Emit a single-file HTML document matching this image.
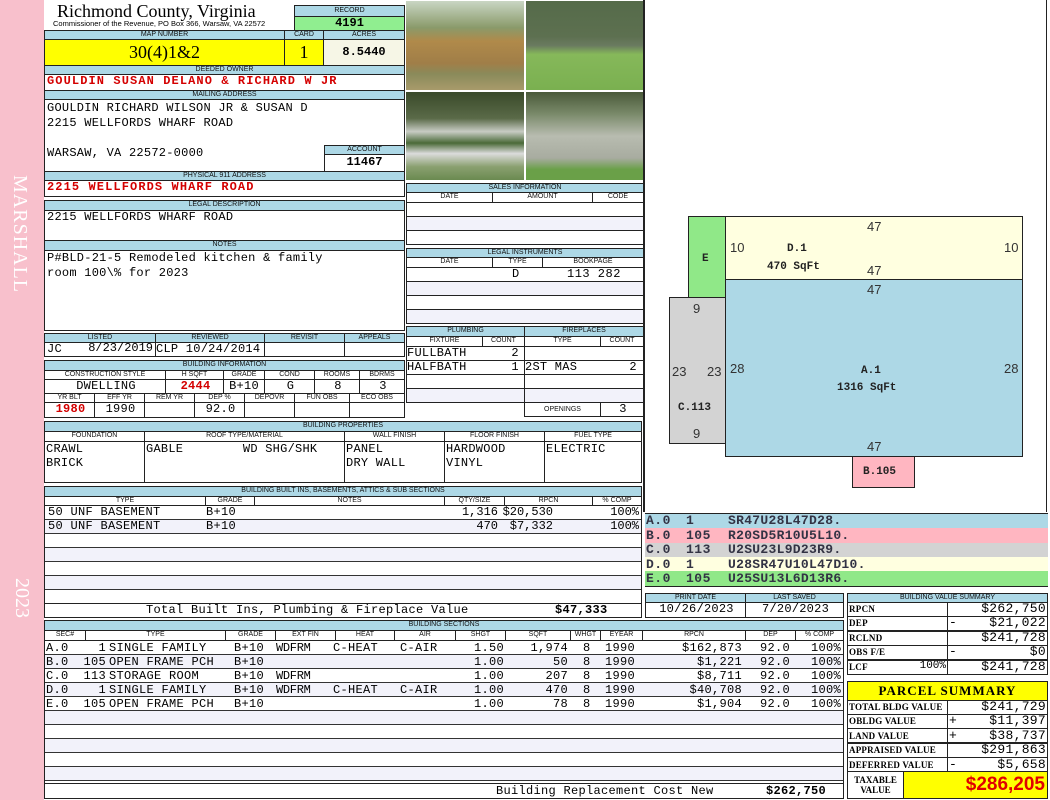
<!DOCTYPE html>
<html><head><meta charset="utf-8"><style>
*{margin:0;padding:0;box-sizing:border-box}
body{width:1050px;height:800px;background:#fff;position:relative;overflow:hidden;font-family:"Liberation Mono",monospace}
.b{position:absolute;border:1px solid #222;overflow:hidden;white-space:pre}
.h{position:absolute;border:1px solid #222;background:#add8e6;font:7px/8px "Liberation Sans",sans-serif;text-align:center;color:#111;white-space:pre;overflow:hidden}
.m{font-size:12px;line-height:13px;padding-left:2px;letter-spacing:0.25px}
.c{text-align:center}
.alt{background:#f2f2fa}
.red{color:#d40000;font-weight:bold}
.t{position:absolute;white-space:pre}
.col{position:absolute;white-space:pre;font-size:12px;line-height:14px;letter-spacing:0.3px}
.ra{text-align:right}
</style></head><body>
<div style="position:absolute;left:0;top:0;width:44px;height:800px;background:#f8c0cc"></div>
<div class="t" style="left:8px;top:175px;writing-mode:vertical-rl;font:20px 'Liberation Serif',serif;color:#fff;letter-spacing:1px">MARSHALL</div>
<div class="t" style="left:10px;top:578px;writing-mode:vertical-rl;font:20px 'Liberation Serif',serif;color:#fff">2023</div>

<div class="t" style="left:57px;top:2px;font:18px/18px 'Liberation Serif',serif">Richmond County, Virginia</div>
<div class="t" style="left:53px;top:20px;font:7.5px/8px 'Liberation Sans',sans-serif">Commissioner of the Revenue, PO Box 366, Warsaw, VA 22572</div>
<div class="h" style="left:294px;top:5px;width:111px;height:12px;line-height:10px">RECORD</div>
<div class="b c" style="left:294px;top:16px;width:111px;height:15px;background:#90ee90;font:bold 12px/13px 'Liberation Mono'">4191</div>
<div class="h" style="left:44px;top:30px;width:241px;height:10px">MAP NUMBER</div>
<div class="h" style="left:284px;top:30px;width:40px;height:10px">CARD</div>
<div class="h" style="left:323px;top:30px;width:82px;height:10px">ACRES</div>
<div class="b c" style="left:44px;top:39px;width:241px;height:27px;background:#ff0;font:18px/25px 'Liberation Serif',serif">30(4)1&amp;2</div>
<div class="b c" style="left:284px;top:39px;width:40px;height:27px;background:#ff0;font:18px/25px 'Liberation Serif',serif">1</div>
<div class="b c" style="left:323px;top:39px;width:82px;height:27px;background:#f6f6e6;font:bold 12px/25px 'Liberation Mono'">8.5440</div>
<div class="h" style="left:44px;top:65px;width:361px;height:10px">DEEDED OWNER</div>
<div class="b m red" style="left:44px;top:74px;width:361px;height:17px;letter-spacing:1.1px">GOULDIN SUSAN DELANO &amp; RICHARD W JR</div>
<div class="h" style="left:44px;top:90px;width:361px;height:10px">MAILING ADDRESS</div>
<div class="b m" style="left:44px;top:99px;width:361px;height:73px;line-height:15px;padding-top:1px">GOULDIN RICHARD WILSON JR &amp; SUSAN D
2215 WELLFORDS WHARF ROAD

WARSAW, VA 22572-0000</div>
<div class="h" style="left:324px;top:145px;width:81px;height:10px">ACCOUNT</div>
<div class="b c" style="left:324px;top:154px;width:81px;height:18px;font:bold 12px/15px 'Liberation Mono'">11467</div>
<div class="h" style="left:44px;top:171px;width:361px;height:10px">PHYSICAL 911 ADDRESS</div>
<div class="b m red" style="left:44px;top:180px;width:361px;height:17px;letter-spacing:1.1px">2215 WELLFORDS WHARF ROAD</div>
<div class="h" style="left:44px;top:200px;width:361px;height:11px">LEGAL DESCRIPTION</div>
<div class="b m" style="left:44px;top:210px;width:361px;height:31px">2215 WELLFORDS WHARF ROAD</div>
<div class="h" style="left:44px;top:240px;width:361px;height:11px">NOTES</div>
<div class="b m" style="left:44px;top:250px;width:361px;height:81px;line-height:15px">P#BLD-21-5 Remodeled kitchen &amp; family
room 100\% for 2023</div>

<div class="h" style="left:44px;top:333px;width:112px;height:10px">LISTED</div>
<div class="h" style="left:155px;top:333px;width:110px;height:10px">REVIEWED</div>
<div class="h" style="left:264px;top:333px;width:81px;height:10px">REVISIT</div>
<div class="h" style="left:344px;top:333px;width:61px;height:10px">APPEALS</div>
<div class="b m" style="left:44px;top:342px;width:112px;height:15px">JC</div>
<div class="t" style="left:84px;top:342px;width:69px;font-size:12px;line-height:13px;text-align:right">8/23/2019</div>
<div class="b m" style="left:155px;top:342px;width:110px;height:15px;padding-left:0">CLP 10/24/2014</div>
<div class="b" style="left:264px;top:342px;width:81px;height:15px"></div>
<div class="b" style="left:344px;top:342px;width:61px;height:15px"></div>

<div class="h" style="left:44px;top:360px;width:361px;height:11px">BUILDING INFORMATION</div>
<div class="h" style="left:44px;top:370px;width:122px;height:10px;background:#fff">CONSTRUCTION STYLE</div>
<div class="h" style="left:165px;top:370px;width:59px;height:10px;background:#fff">H SQFT</div>
<div class="h" style="left:223px;top:370px;width:42px;height:10px;background:#fff">GRADE</div>
<div class="h" style="left:264px;top:370px;width:51px;height:10px;background:#fff">COND</div>
<div class="h" style="left:314px;top:370px;width:46px;height:10px;background:#fff">ROOMS</div>
<div class="h" style="left:359px;top:370px;width:46px;height:10px;background:#fff">BDRMS</div>
<div class="b m c" style="left:44px;top:379px;width:122px;height:15px">DWELLING</div>
<div class="b m c red" style="left:165px;top:379px;width:59px;height:15px">2444</div>
<div class="b m c" style="left:223px;top:379px;width:42px;height:15px;padding:0">B+10</div>
<div class="b m c" style="left:264px;top:379px;width:51px;height:15px">G</div>
<div class="b m c" style="left:314px;top:379px;width:46px;height:15px">8</div>
<div class="b m c" style="left:359px;top:379px;width:46px;height:15px">3</div>
<div class="h" style="left:44px;top:393px;width:51px;height:10px;background:#fff">YR BLT</div>
<div class="h" style="left:94px;top:393px;width:51px;height:10px;background:#fff">EFF YR</div>
<div class="h" style="left:144px;top:393px;width:51px;height:10px;background:#fff">REM YR</div>
<div class="h" style="left:194px;top:393px;width:51px;height:10px;background:#fff">DEP %</div>
<div class="h" style="left:244px;top:393px;width:51px;height:10px;background:#fff">DEPOVR</div>
<div class="h" style="left:294px;top:393px;width:56px;height:10px;background:#fff">FUN OBS</div>
<div class="h" style="left:349px;top:393px;width:56px;height:10px;background:#fff">ECO OBS</div>
<div class="b m c red" style="left:44px;top:402px;width:51px;height:16px">1980</div>
<div class="b m c" style="left:94px;top:402px;width:51px;height:16px">1990</div>
<div class="b" style="left:144px;top:402px;width:51px;height:16px"></div>
<div class="b m c" style="left:194px;top:402px;width:51px;height:16px">92.0</div>
<div class="b" style="left:244px;top:402px;width:51px;height:16px"></div>
<div class="b" style="left:294px;top:402px;width:56px;height:16px"></div>
<div class="b" style="left:349px;top:402px;width:56px;height:16px"></div>

<div class="b" style="left:405px;top:0;width:120px;height:91px;border-color:#fff;background:linear-gradient(180deg,#c9d6c4 0%,#8a9a6a 30%,#b08a4a 45%,#a07e48 70%,#8a8a5a 82%,#a89a6a 100%)"></div>
<div class="b" style="left:525px;top:0;width:120px;height:91px;border-color:#fff;background:linear-gradient(180deg,#556b4a 0%,#5d7050 40%,#6a7a60 50%,#86b85a 60%,#7ab050 100%)"></div>
<div class="b" style="left:405px;top:91px;width:120px;height:90px;border-color:#fff;background:linear-gradient(180deg,#3a4a2a 0%,#5a6a48 30%,#c8ccc4 45%,#4a6a38 58%,#dcdcdc 70%,#8aa070 85%,#6a8a50 100%)"></div>
<div class="b" style="left:525px;top:91px;width:120px;height:90px;border-color:#fff;background:linear-gradient(180deg,#4a5a3a 0%,#7a8a6a 25%,#b8bcb0 50%,#a8aca0 75%,#6aa048 88%,#6aa048 100%)"></div>

<div class="h" style="left:406px;top:183px;width:238px;height:10px">SALES INFORMATION</div>
<div class="h" style="left:406px;top:192px;width:87px;height:11px;background:#fff">DATE</div>
<div class="h" style="left:492px;top:192px;width:101px;height:11px;background:#fff">AMOUNT</div>
<div class="h" style="left:592px;top:192px;width:52px;height:11px;background:#fff">CODE</div>
<div class="b" style="left:406px;top:202px;width:238px;height:15px"></div>
<div class="b alt" style="left:406px;top:216px;width:238px;height:15px"></div>
<div class="b" style="left:406px;top:230px;width:238px;height:15px"></div>
<div class="h" style="left:406px;top:248px;width:238px;height:10px">LEGAL INSTRUMENTS</div>
<div class="h" style="left:406px;top:257px;width:87px;height:11px;background:#fff">DATE</div>
<div class="h" style="left:492px;top:257px;width:51px;height:11px;background:#fff">TYPE</div>
<div class="h" style="left:542px;top:257px;width:102px;height:11px;background:#fff">BOOKPAGE</div>
<div class="b" style="left:406px;top:267px;width:238px;height:15px"></div>
<div class="t" style="left:512px;top:268px;font-size:12px;line-height:13px">D</div>
<div class="t" style="left:567px;top:268px;font-size:12px;line-height:13px;letter-spacing:0.5px">113 282</div>
<div class="b alt" style="left:406px;top:281px;width:238px;height:15px"></div>
<div class="b" style="left:406px;top:295px;width:238px;height:15px"></div>
<div class="b alt" style="left:406px;top:309px;width:238px;height:15px"></div>

<div class="h" style="left:406px;top:326px;width:119px;height:11px">PLUMBING</div>
<div class="h" style="left:524px;top:326px;width:120px;height:11px">FIREPLACES</div>
<div class="h" style="left:406px;top:336px;width:77px;height:11px;background:#fff">FIXTURE</div>
<div class="h" style="left:482px;top:336px;width:43px;height:11px;background:#fff">COUNT</div>
<div class="h" style="left:524px;top:336px;width:77px;height:11px;background:#fff">TYPE</div>
<div class="h" style="left:600px;top:336px;width:44px;height:11px;background:#fff">COUNT</div>
<div class="b m" style="left:406px;top:346px;width:119px;height:15px;padding:0">FULLBATH      2</div>
<div class="b m" style="left:406px;top:360px;width:119px;height:15px;padding:0">HALFBATH      1</div>
<div class="b" style="left:406px;top:374px;width:119px;height:15px"></div>
<div class="b alt" style="left:406px;top:388px;width:119px;height:15px"></div>
<div class="b" style="left:524px;top:346px;width:120px;height:15px"></div>
<div class="b m" style="left:524px;top:360px;width:120px;height:15px;padding:0">2ST MAS       2</div>
<div class="b" style="left:524px;top:374px;width:120px;height:15px"></div>
<div class="b alt" style="left:524px;top:388px;width:120px;height:15px"></div>
<div class="h" style="left:524px;top:402px;width:77px;height:15px;background:#fff;line-height:13px">OPENINGS</div>
<div class="b m c" style="left:600px;top:402px;width:44px;height:15px">3</div>

<div class="h" style="left:44px;top:421px;width:598px;height:11px">BUILDING PROPERTIES</div>
<div class="h" style="left:44px;top:431px;width:101px;height:11px;background:#fff">FOUNDATION</div>
<div class="h" style="left:144px;top:431px;width:201px;height:11px;background:#fff">ROOF TYPE/MATERIAL</div>
<div class="h" style="left:344px;top:431px;width:101px;height:11px;background:#fff">WALL FINISH</div>
<div class="h" style="left:444px;top:431px;width:101px;height:11px;background:#fff">FLOOR FINISH</div>
<div class="h" style="left:544px;top:431px;width:98px;height:11px;background:#fff">FUEL TYPE</div>
<div class="b m" style="left:44px;top:441px;width:101px;height:42px;line-height:14px;padding-left:1px">CRAWL
BRICK</div>
<div class="b m" style="left:144px;top:441px;width:201px;height:42px;line-height:14px;padding-left:1px">GABLE        WD SHG/SHK</div>
<div class="b m" style="left:344px;top:441px;width:101px;height:42px;line-height:14px;padding-left:1px">PANEL
DRY WALL</div>
<div class="b m" style="left:444px;top:441px;width:101px;height:42px;line-height:14px;padding-left:1px">HARDWOOD
VINYL</div>
<div class="b m" style="left:544px;top:441px;width:98px;height:42px;line-height:14px;padding-left:1px">ELECTRIC</div>

<div class="h" style="left:44px;top:486px;width:598px;height:11px">BUILDING BUILT INS, BASEMENTS, ATTICS &amp; SUB SECTIONS</div>
<div class="h" style="left:44px;top:496px;width:162px;height:10px;background:#fff">TYPE</div>
<div class="h" style="left:205px;top:496px;width:50px;height:10px;background:#fff">GRADE</div>
<div class="h" style="left:254px;top:496px;width:191px;height:10px;background:#fff">NOTES</div>
<div class="h" style="left:444px;top:496px;width:61px;height:10px;background:#fff">QTY/SIZE</div>
<div class="h" style="left:504px;top:496px;width:89px;height:10px;background:#fff">RPCN</div>
<div class="h" style="left:592px;top:496px;width:50px;height:10px;background:#fff">% COMP</div>
<div class="b" style="left:44px;top:505px;width:598px;height:99px;background:repeating-linear-gradient(180deg,#fff 0,#fff 13px,#333 13px,#333 14px,#f2f2fa 14px,#f2f2fa 27px,#333 27px,#333 28px)"></div>
<div class="col" style="left:48px;top:505px">50 UNF BASEMENT
50 UNF BASEMENT</div>
<div class="col" style="left:206px;top:505px">B+10
B+10</div>
<div class="col ra" style="left:440px;top:505px;width:58px;letter-spacing:0">1,316
470</div>
<div class="col ra" style="left:500px;top:505px;width:53px;letter-spacing:0">$20,530
$7,332</div>
<div class="col ra" style="left:590px;top:505px;width:49px;letter-spacing:0">100%
100%</div>
<div class="b" style="left:44px;top:603px;width:598px;height:15px"></div>
<div class="col" style="left:146px;top:603px">Total Built Ins, Plumbing &amp; Fireplace Value</div>
<div class="col" style="left:555px;top:603px;font-weight:bold">$47,333</div>

<div class="h" style="left:44px;top:620px;width:800px;height:11px">BUILDING SECTIONS</div>
<div class="h" style="left:44px;top:630px;width:42px;height:11px;background:#fff">SEC#</div>
<div class="h" style="left:85px;top:630px;width:141px;height:11px;background:#fff">TYPE</div>
<div class="h" style="left:225px;top:630px;width:51px;height:11px;background:#fff">GRADE</div>
<div class="h" style="left:275px;top:630px;width:61px;height:11px;background:#fff">EXT FIN</div>
<div class="h" style="left:335px;top:630px;width:60px;height:11px;background:#fff">HEAT</div>
<div class="h" style="left:394px;top:630px;width:62px;height:11px;background:#fff">AIR</div>
<div class="h" style="left:455px;top:630px;width:51px;height:11px;background:#fff">SHGT</div>
<div class="h" style="left:505px;top:630px;width:66px;height:11px;background:#fff">SQFT</div>
<div class="h" style="left:570px;top:630px;width:31px;height:11px;background:#fff">WHGT</div>
<div class="h" style="left:600px;top:630px;width:43px;height:11px;background:#fff">EYEAR</div>
<div class="h" style="left:642px;top:630px;width:104px;height:11px;background:#fff">RPCN</div>
<div class="h" style="left:745px;top:630px;width:51px;height:11px;background:#fff">DEP</div>
<div class="h" style="left:795px;top:630px;width:49px;height:11px;background:#fff">% COMP</div>
<div class="b" style="left:44px;top:640px;width:800px;height:144px;background:repeating-linear-gradient(180deg,#fff 0,#fff 13px,#333 13px,#333 14px,#f2f2fa 14px,#f2f2fa 27px,#333 27px,#333 28px)"></div>
<div class="col" style="left:46px;top:641px">A.0
B.0
C.0
D.0
E.0</div>
<div class="col ra" style="left:80px;top:641px;width:26px">1
105
113
1
105</div>
<div class="col" style="left:109px;top:641px">SINGLE FAMILY
OPEN FRAME PCH
STORAGE ROOM
SINGLE FAMILY
OPEN FRAME PCH</div>
<div class="col" style="left:234px;top:641px">B+10
B+10
B+10
B+10
B+10</div>
<div class="col" style="left:276px;top:641px;letter-spacing:-0.3px">WDFRM

WDFRM
WDFRM</div>
<div class="col" style="left:333px;top:641px">C-HEAT


C-HEAT</div>
<div class="col" style="left:400px;top:641px">C-AIR


C-AIR</div>
<div class="col" style="left:474px;top:641px">1.50
1.00
1.00
1.00
1.00</div>
<div class="col ra" style="left:510px;top:641px;width:58px">1,974
50
207
470
78</div>
<div class="col" style="left:583px;top:641px">8
8
8
8
8</div>
<div class="col" style="left:605px;top:641px">1990
1990
1990
1990
1990</div>
<div class="col ra" style="left:650px;top:641px;width:92px">$162,873
$1,221
$8,711
$40,708
$1,904</div>
<div class="col" style="left:760px;top:641px">92.0
92.0
92.0
92.0
92.0</div>
<div class="col ra" style="left:800px;top:641px;width:41px">100%
100%
100%
100%
100%</div>
<div class="b" style="left:44px;top:783px;width:800px;height:16px"></div>
<div class="col" style="left:496px;top:784px">Building Replacement Cost New</div>
<div class="col" style="left:766px;top:784px;font-weight:bold">$262,750</div>

<div style="position:absolute;left:643px;top:0;width:2px;height:512px;background:#222"></div>
<div style="position:absolute;left:1046px;top:0;width:1px;height:512px;background:#222"></div>
<svg style="position:absolute;left:645px;top:0" width="402" height="512" font-family="Liberation Sans" font-size="13" fill="#333">
<rect x="43.5" y="216.5" width="37" height="81" fill="#90e888" stroke="#222"/>
<rect x="80.5" y="216.5" width="297" height="63" fill="#ffffe0" stroke="#222"/>
<rect x="24.5" y="297.5" width="56" height="146" fill="#d3d3d3" stroke="#222"/>
<rect x="80.5" y="279.5" width="297" height="177" fill="#add8e6" stroke="#222"/>
<rect x="207.5" y="456.5" width="62" height="31" fill="#ffb6c1" stroke="#222"/>
<g font-family="Liberation Mono" font-weight="bold" font-size="11" fill="#222">
<text x="57" y="261">E</text><text x="142" y="251">D.1</text><text x="122" y="269">470 SqFt</text>
<text x="216" y="373">A.1</text><text x="192" y="390">1316 SqFt</text>
<text x="33" y="410">C.113</text><text x="218" y="474">B.105</text></g>
<text x="222" y="231">47</text><text x="222" y="275">47</text><text x="222" y="294">47</text><text x="222" y="451">47</text>
<text x="85" y="252">10</text><text x="359" y="252">10</text>
<text x="85" y="373">28</text><text x="359" y="373">28</text>
<text x="27" y="376">23</text><text x="62" y="376">23</text>
<text x="48" y="313">9</text><text x="48" y="438">9</text>
</svg>

<div class="b" style="left:645px;top:513px;width:403px;height:74px"></div>
<div class="t" style="left:645px;top:514px;width:403px;height:15px;background:#add8e6"></div>
<div class="t" style="left:645px;top:528px;width:403px;height:15px;background:#ffb6c1"></div>
<div class="t" style="left:645px;top:543px;width:403px;height:15px;background:#d3d3d3"></div>
<div class="t" style="left:645px;top:557px;width:403px;height:15px;background:#ffffe0"></div>
<div class="t" style="left:645px;top:571px;width:403px;height:15px;background:#90e888"></div>
<div class="t" style="left:646px;top:514px;font:bold 13px/14.5px 'Liberation Mono';color:#334;letter-spacing:0.5px">A.0
B.0
C.0
D.0
E.0</div>
<div class="t" style="left:686px;top:514px;font:bold 13px/14.5px 'Liberation Mono';color:#334;letter-spacing:0.5px">1
105
113
1
105</div>
<div class="t" style="left:728px;top:514px;font:bold 13px/14.5px 'Liberation Mono';color:#334;letter-spacing:0.3px">SR47U28L47D28.
R20SD5R10U5L10.
U2SU23L9D23R9.
U28SR47U10L47D10.
U25SU13L6D13R6.</div>

<div class="h" style="left:645px;top:593px;width:101px;height:10px">PRINT DATE</div>
<div class="h" style="left:745px;top:593px;width:99px;height:10px">LAST SAVED</div>
<div class="b m c" style="left:645px;top:602px;width:101px;height:16px">10/26/2023</div>
<div class="b m c" style="left:745px;top:602px;width:99px;height:16px">7/20/2023</div>

<div class="h" style="left:847px;top:593px;width:201px;height:10px">BUILDING VALUE SUMMARY</div>
<div class="b" style="left:847px;top:602px;width:101px;height:73px"></div>
<div class="b" style="left:947px;top:602px;width:101px;height:73px"></div>
<div class="t" style="left:847px;top:602px;width:100px;font:bold 9px/14.4px 'Liberation Serif',serif;padding-left:2px;letter-spacing:0.3px">RPCN
DEP
RCLND
OBS F/E
LCF</div>
<div class="t" style="left:900px;top:659px;width:46px;font:11px/14.4px 'Liberation Mono';text-align:right">100%</div>
<div class="t" style="left:947px;top:602px;width:101px;font:13px/14.4px 'Liberation Mono';padding:0 2px;text-align:right;letter-spacing:0.3px">$262,750
<span style="float:left">-</span>$21,022
$241,728
<span style="float:left">-</span>$0
$241,728</div>
<div style="position:absolute;left:847px;top:616px;width:201px;height:1px;background:#222"></div>
<div style="position:absolute;left:847px;top:630px;width:201px;height:2px;background:#222"></div>
<div style="position:absolute;left:847px;top:645px;width:201px;height:1px;background:#222"></div>
<div style="position:absolute;left:847px;top:659px;width:201px;height:2px;background:#222"></div>

<div class="b" style="left:847px;top:681px;width:201px;height:20px;background:#ff0;font:bold 13px/18px 'Liberation Serif',serif;text-align:center;letter-spacing:1px">PARCEL SUMMARY</div>
<div class="b" style="left:847px;top:700px;width:101px;height:72px"></div>
<div class="b" style="left:947px;top:700px;width:101px;height:72px"></div>
<div class="t" style="left:847px;top:700px;font:bold 9px/14.4px 'Liberation Serif',serif;padding-left:2px;letter-spacing:0.2px">TOTAL BLDG VALUE
OBLDG VALUE
LAND VALUE
APPRAISED VALUE
DEFERRED VALUE</div>
<div class="t" style="left:947px;top:700px;width:101px;font:13px/14.4px 'Liberation Mono';padding:0 2px;text-align:right;letter-spacing:0.3px">$241,729
<span style="float:left">+</span>$11,397
<span style="float:left">+</span>$38,737
$291,863
<span style="float:left">-</span>$5,658</div>
<div style="position:absolute;left:847px;top:714px;width:201px;height:1px;background:#222"></div>
<div style="position:absolute;left:847px;top:728px;width:201px;height:1px;background:#222"></div>
<div style="position:absolute;left:847px;top:742px;width:201px;height:2px;background:#222"></div>
<div style="position:absolute;left:847px;top:757px;width:201px;height:1px;background:#222"></div>
<div class="b" style="left:847px;top:771px;width:57px;height:28px;font:bold 9px/10px 'Liberation Serif',serif;text-align:center;padding-top:3px">TAXABLE
VALUE</div>
<div class="b" style="left:903px;top:771px;width:145px;height:28px;background:#ff0;color:#e00000;font:bold 19px/26px 'Liberation Sans',sans-serif;text-align:right;padding-right:2px">$286,205</div>
</body></html>
